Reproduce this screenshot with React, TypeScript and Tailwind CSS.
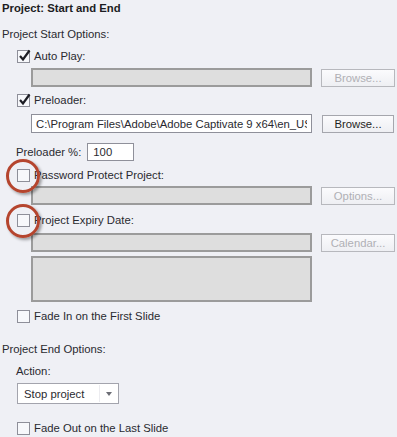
import React from "react";

// ─── Small controls ──────────────────────────────────────────────────────────

function Box({ checked = false, circled = false }: { checked?: boolean; circled?: boolean }) {
  return (
    <span className="relative w-[13px] h-[13px] flex-shrink-0 border border-[#8e8f99] bg-[#f7f8fb] flex items-center justify-center">
      {checked && (
        <svg width="13" height="13" viewBox="0 0 13 13" className="absolute -top-[2px] left-[0px]">
          <path d="M2 7 L5 10.5 L11.5 1.5" fill="none" stroke="#1d1d24" strokeWidth="2.2" />
        </svg>
      )}
      {circled && (
        <span className="absolute -left-[12px] -top-[11px] w-[34px] h-[34px] rounded-full border-[3px] border-[#b5452e] shadow-[2px_2px_3px_rgba(0,0,0,0.35)]" />
      )}
    </span>
  );
}

function Check({ label, checked, circled }: { label: string; checked?: boolean; circled?: boolean }) {
  return (
    <div className="h-4 pl-[17px] flex items-center gap-[4px]">
      <Box checked={checked} circled={circled} />
      <span>{label}</span>
    </div>
  );
}

function Btn({ label, disabled = false }: { label: string; disabled?: boolean }) {
  return (
    <div
      className={`h-[18px] flex items-center justify-center border bg-gradient-to-b from-[#fbfbfd] to-[#eeeff3] ${
        disabled ? "w-[74px] border-[#b7b8bd] text-[#b0b0b5]" : "w-[72px] ml-[1px] border-[#a5a6ad] text-[#1f1f24]"
      }`}
    >
      {label}
    </div>
  );
}

function Field({ value, btn, disabled = true, btnDisabled = true }: { value?: string; btn?: string; disabled?: boolean; btnDisabled?: boolean }) {
  return (
    <div className="pl-[31px] flex items-center gap-[9px]">
      <div
        className={`w-[281px] h-[19px] overflow-hidden whitespace-nowrap flex items-center px-[4px] ${
          disabled ? "bg-[#dedede] border-2 border-[#9b9b9b]" : "bg-white border border-[#8f909a]"
        }`}
      >
        {value && <span className="block overflow-hidden">{value}</span>}
      </div>
      {btn && <Btn label={btn} disabled={btnDisabled} />}
    </div>
  );
}

// ─── Page ────────────────────────────────────────────────────────────────────

export default function App() {
  return (
    <div className="w-[397px] h-[437px] overflow-hidden bg-[#eff0f5] text-[11.3px] leading-4 text-[#2a2a30] font-['Liberation_Sans',Arial,sans-serif]">
      <div className="h-4 pl-[2px] font-bold text-[#1c1c22]">Project: Start and End</div>

      <div className="mt-[10px] h-4 pl-[2px]">Project Start Options:</div>

      <div className="mt-[6px]">
        <Check label="Auto Play:" checked />
      </div>
      <div className="mt-[4px]">
        <Field btn="Browse..." />
      </div>

      <div className="mt-[5px]">
        <Check label="Preloader:" checked />
      </div>
      <div className="mt-[6px]">
        <Field value="C:\Program Files\Adobe\Adobe Captivate 9 x64\en_US\C" btn="Browse..." disabled={false} btnDisabled={false} />
      </div>

      <div className="mt-[10px] h-[18px] pl-[16px] flex items-center gap-[6px]">
        <span>Preloader %:</span>
        <div className="w-[47px] h-[18px] bg-white border border-[#8f909a] flex items-center px-[5px]">100</div>
      </div>

      <div className="mt-[6px]">
        <Check label="Password Protect Project:" circled />
      </div>
      <div className="mt-[3px]">
        <Field btn="Options..." />
      </div>

      <div className="mt-[7px]">
        <Check label="Project Expiry Date:" circled />
      </div>
      <div className="mt-[5px]">
        <Field btn="Calendar..." />
      </div>
      <div className="mt-[4px] pl-[31px]">
        <div className="w-[281px] h-[46px] bg-[#dedede] border-2 border-[#9b9b9b]" />
      </div>

      <div className="mt-[6px]">
        <Check label="Fade In on the First Slide" />
      </div>

      <div className="mt-[17px] h-4 pl-[2px]">Project End Options:</div>

      <div className="mt-[6px] h-4 pl-[16px]">Action:</div>

      <div className="mt-[4px] pl-[17px]">
        <div className="w-[102px] h-[21px] bg-white border border-[#a3a4ad] flex items-center">
          <span className="flex-1 pl-[6px]">Stop project</span>
          <span className="w-px h-[17px] bg-[#ececf0]" />
          <svg width="16" height="8" viewBox="0 0 16 8" className="mx-[1px]">
            <path d="M5 2 L11 2 L8 6 Z" fill="#6c6d75" />
          </svg>
        </div>
      </div>

      <div className="mt-[16px]">
        <Check label="Fade Out on the Last Slide" />
      </div>
    </div>
  );
}
